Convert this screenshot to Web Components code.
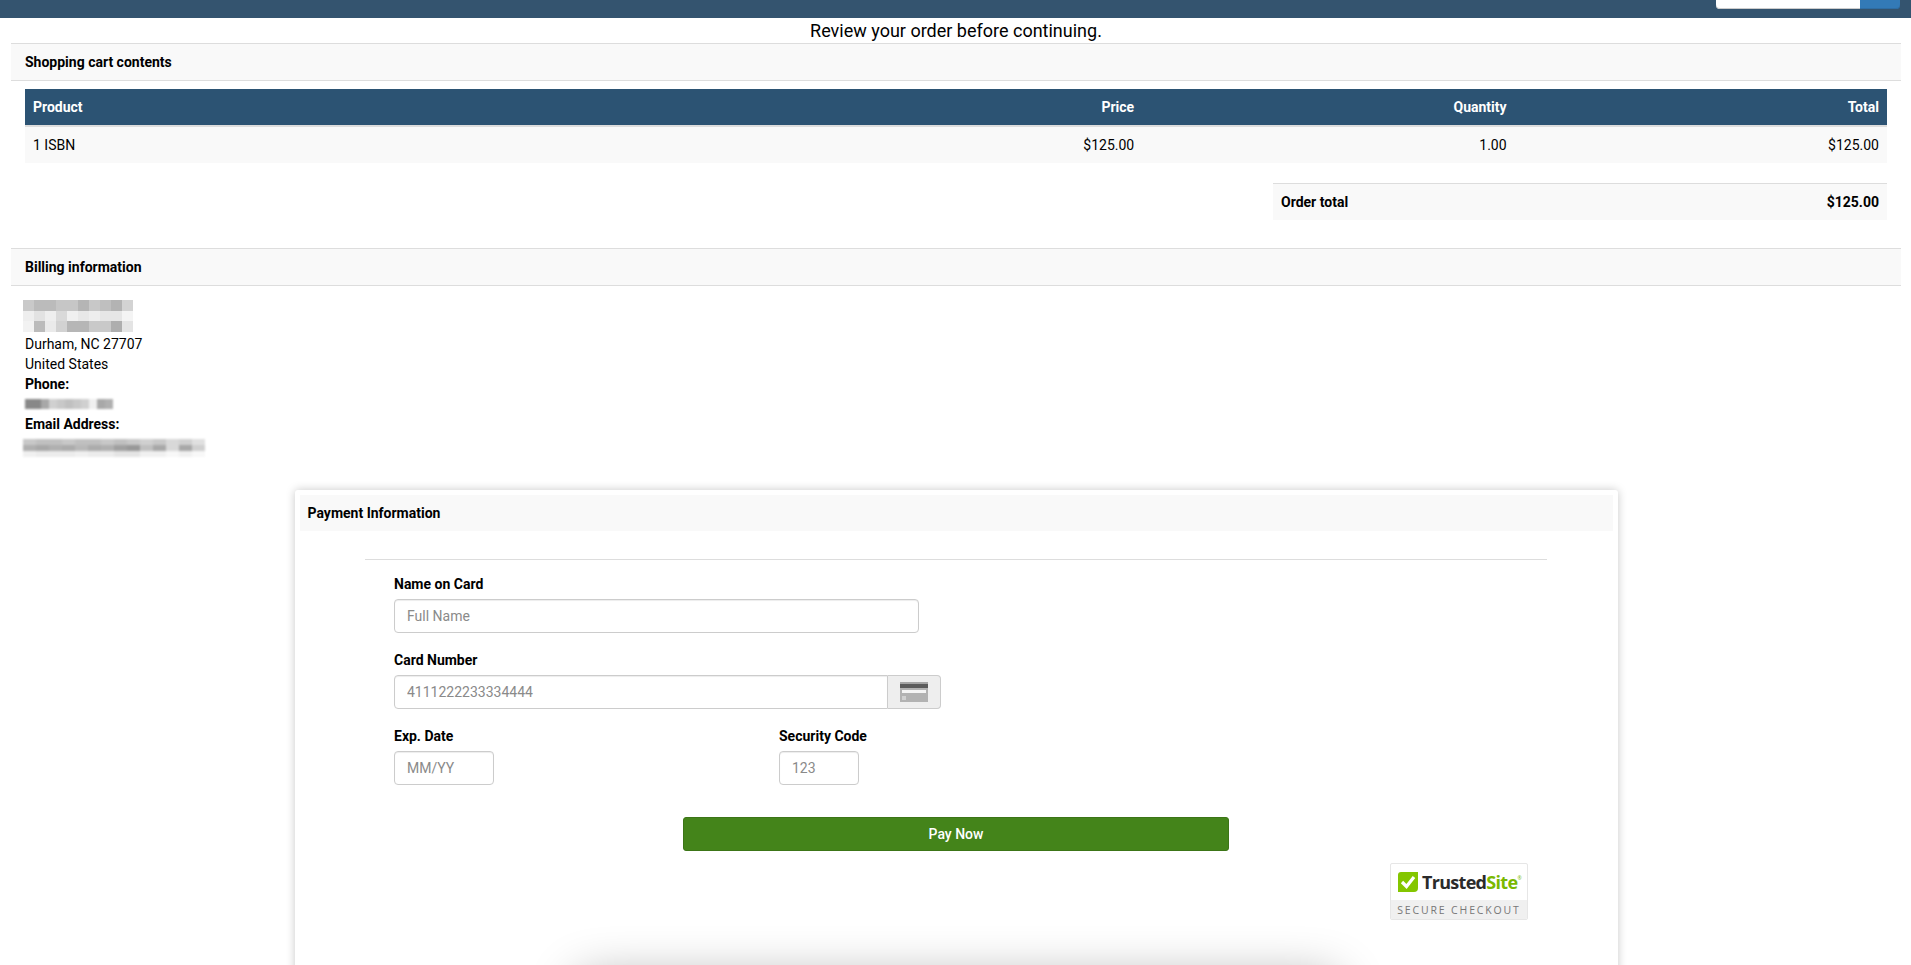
<!DOCTYPE html>
<html lang="en">
<head>
<meta charset="utf-8">
<title>Review order</title>
<style>
  html, body { margin: 0; height: 965px; overflow: hidden; background: #fff; }
  body { font: 14px/20px Roboto, "Liberation Sans", sans-serif; color: #000; }
</style>
</head>
<body>
<top-bar></top-bar>
<page-title>Review your order before continuing.</page-title>

<section-head>Shopping cart contents</section-head>
<cart-table></cart-table>

<section-head style="margin-top:28px">Billing information</section-head>
<billing-info></billing-info>

<payment-card></payment-card>

<script>
class TopBar extends HTMLElement {
  constructor() {
    super();
    this.attachShadow({ mode: 'open' }).innerHTML = `
      <style>
        :host { display: flex; justify-content: flex-end; align-items: flex-end; height: 18px; padding: 0 11px 9px 0; box-sizing: border-box; background: #34546f; overflow: hidden; }
        .search { flex: none; width: 144px; height: 34px; background: #fff; border-radius: 0 0 0 4px; box-shadow: inset 0 -1px 0 #ccc; }
        .go { flex: none; width: 40px; height: 34px; background: #337ab7; border-radius: 0 0 4px 0; box-shadow: inset 0 -1px 0 #2e6da4; }
      </style>
      <div class="search"></div><div class="go"></div>`;
  }
}

class PageTitle extends HTMLElement {
  constructor() {
    super();
    this.attachShadow({ mode: 'open' }).innerHTML = `
      <style>
        :host { display: block; padding-left: 1px; font-size: 18px; line-height: 25px; text-align: center; }
      </style>
      <slot></slot>`;
  }
}

class SectionHead extends HTMLElement {
  constructor() {
    super();
    this.attachShadow({ mode: 'open' }).innerHTML = `
      <style>
        :host { display: block; margin: 0 10px 0 11px; padding: 8px 14px; font-weight: 700; background: #f9f9f9; border-top: 1px solid #ddd; border-bottom: 1px solid #ddd; }
      </style>
      <slot></slot>`;
  }
}

class CartTable extends HTMLElement {
  constructor() {
    super();
    this.attachShadow({ mode: 'open' }).innerHTML = `
      <style>
        :host { display: block; margin: 8px 24px 0 25px; }
        .row { display: grid; grid-template-columns: 50% 10% 20% 20%; }
        .row > div { padding: 8px; text-align: right; }
        .row > div:first-child { text-align: left; }
        .head { background: #2c5373; color: #fff; font-weight: 700; border-bottom: 2px solid #ddd; }
        .line { background: #f9f9f9; }
        .sum { display: flex; justify-content: space-between; width: 614px; box-sizing: border-box; margin: 20px 0 0 auto; padding: 8px; font-weight: 700; background: #f9f9f9; border-top: 1px solid #ddd; }
      </style>
      <div class="row head"><div>Product</div><div>Price</div><div>Quantity</div><div>Total</div></div>
      <div class="row line"><div>1 ISBN</div><div>$125.00</div><div>1.00</div><div>$125.00</div></div>
      <div class="sum"><span>Order total</span><span>$125.00</span></div>`;
  }
}

// smudged blocks standing in for the redacted text, data is one grey per cell
class PixelBlur extends HTMLElement {
  connectedCallback() {
    const rows = this.getAttribute('cells').split('|').map(r => r.split(' '));
    const w = this.getAttribute('cell-w');
    const h = this.getAttribute('cell-h');
    const root = this.attachShadow({ mode: 'open' });
    const cells = rows.flat().map(c => `<i style="background:#${c}${c}${c}"></i>`).join('');
    root.innerHTML = `
      <style>
        :host { display: block; width: max-content; }
        .grid { display: grid; grid-template-columns: repeat(${rows[0].length}, ${w}px); grid-auto-rows: ${h}px; filter: blur(${this.getAttribute('blur') || 0.6}px); }
      </style>
      <div class="grid">${cells}</div>`;
  }
}

class BillingInfo extends HTMLElement {
  constructor() {
    super();
    this.attachShadow({ mode: 'open' }).innerHTML = `
      <style>
        :host { display: block; padding: 14px 0 0 25px; }
        pixel-blur { margin-left: -2px; }
        .phone pixel-blur { margin-left: 0; }
        b { display: block; }
        div { height: 20px; }
        .phone { display: flex; align-items: center; }
        .mail { margin-top: 5px; }
      </style>
      <pixel-blur cell-w="11" cell-h="10.5" cells="c9 bb bb c6 c6 b5 c8 bf b3 d3|ee e2 ee d9 f0 e8 ee e6 e6 f4|f2 bb ea d2 b6 b6 c9 c9 ae e4"></pixel-blur>
      <div style="margin-top:2.500px">Durham, NC 27707</div>
      <div>United States</div>
      <b>Phone:</b>
      <div class="phone"><pixel-blur cell-w="8" cell-h="10" blur="1" cells="88 88 a8 d0 c8 c0 c8 d0 f0 a8 b0"></pixel-blur></div>
      <b>Email Address:</b>
      <pixel-blur class="mail" cell-w="13" cell-h="6" blur="0.8" cells="c8 c0 c0 c8 c0 c0 c8 c0 c8 d0 c8 d8 d0 e0|b0 a8 b0 ac b8 ac b0 a0 98 c0 a8 d8 a8 d0|f0 ec ec ec f0 ec ec e4 e4 f0 f0 f8 f0 f8"></pixel-blur>`;
  }
}

class FormField extends HTMLElement {
  constructor() {
    super();
    this.attachShadow({ mode: 'open' }).innerHTML = `
      <style>
        :host { display: block; margin-bottom: 17px; }
        label { display: block; font-weight: 700; margin-bottom: 5px; }
        .wrap { display: flex; }
        ::slotted(*) { flex: none; }
      </style>
      <label></label>
      <div class="wrap"><slot></slot></div>`;
    this.shadowRoot.querySelector('label').textContent = this.getAttribute('label');
  }
}

class TextBox extends HTMLElement {
  constructor() {
    super();
    this.attachShadow({ mode: 'open' }).innerHTML = `
      <style>
        :host { display: block; }
        input { display: block; width: 100%; height: 34px; box-sizing: border-box; padding: 0 12px; font: inherit; color: #555; background: #fff; border: 1px solid #ccc; border-radius: var(--box-radius, 4px); outline: none; box-shadow: inset 0 1px 1px rgba(0,0,0,.075); }
        input::placeholder { color: #8a8a8a; opacity: 1; }
      </style>
      <input type="text">`;
    this.shadowRoot.querySelector('input').placeholder = this.getAttribute('hint');
  }
}

class TrustBadge extends HTMLElement {
  constructor() {
    super();
    this.attachShadow({ mode: 'open' }).innerHTML = `
      <style>
        :host { display: block; width: 138px; height: 57px; box-sizing: border-box; border: 1px solid #e6e6e6; border-radius: 2px; font-family: "Open Sans", sans-serif; overflow: hidden; }
        .top { display: flex; align-items: center; gap: 4px; height: 36px; padding-left: 7px; box-sizing: border-box; font-size: 18px; font-weight: 700; letter-spacing: -0.7px; color: #2b2b2b; }
        .top em { font-style: normal; color: #7ab800; }
        .top sup { font-size: 5px; font-weight: 400; line-height: 0; letter-spacing: 0; color: #7ab800; vertical-align: 9px; }
        .bottom { height: 20px; background: #f0f0f0; font-size: 10.5px; line-height: 20px; letter-spacing: 1.85px; color: #777; text-align: center; white-space: nowrap; }
        svg { flex: none; display: block; }
      </style>
      <div class="top">
        <svg width="20" height="20" viewBox="0 0 20 20"><path d="M3 0h17v16a4 4 0 0 1-4 4H0V3a3 3 0 0 1 3-3z" fill="#84c600"/><path d="M4 10l4.500 4.500L16 5" fill="none" stroke="#fff" stroke-width="3.200"/></svg>
        <span>Trusted<em>Site</em><sup>®</sup></span>
      </div>
      <div class="bottom">SECURE CHECKOUT</div>`;
  }
}

class PaymentCard extends HTMLElement {
  constructor() {
    super();
    this.attachShadow({ mode: 'open' }).innerHTML = `
      <style>
        :host { display: block; position: relative; width: 1323px; height: 600px; box-sizing: border-box; margin: 33px 0 0 295px; padding: 5px; background: #fff; border-radius: 3px; box-shadow: 0 0 10px rgba(0,0,0,.22); }
        .head { padding: 8px 7.5px; font-weight: 700; background: #f9f9f9; }
        .inner { margin: 28px 66px 0 65px; padding: 14px 0 0 29px; border-top: 1px solid #ddd; }
        .cols { display: grid; grid-template-columns: 385px 1fr; }
        .addon { width: 53px; height: 34px; box-sizing: border-box; display: flex; align-items: center; justify-content: center; background: #eee; border: 1px solid #ccc; border-left: 0; border-radius: 0 4px 4px 0; }
        .pay { display: block; width: 546px; height: 34px; margin: 32px 0 0 289px; padding: 0; font: inherit; font-weight: 500; color: #fff; background: #44841a; border: 1px solid #3c7517; border-radius: 3px; }
        .badge-row { display: flex; justify-content: flex-end; margin: 12px 19px 0 0; }
        .glow { position: absolute; left: 283px; top: 488px; width: 759px; height: 60px; border-radius: 8px; box-shadow: 0 0 50px rgba(0,0,0,.33); }
      </style>
      <div class="head">Payment Information</div>
      <div class="inner">
        <form-field label="Name on Card"><text-box hint="Full Name" style="width:525px"></text-box></form-field>
        <form-field label="Card Number">
          <text-box hint="4111222233334444" style="width:494px;--box-radius:4px 0 0 4px"></text-box>
          <span class="addon">
            <svg width="28" height="20" viewBox="0 0 28 20">
              <rect width="28" height="20" fill="#b2b2b2"/>
              <rect width="28" height="2" fill="#a5a5a5"/>
              <rect y="2" width="28" height="4" fill="#5c5c5c"/>
              <rect x="2" y="8" width="24" height="3" fill="#f4f4f4"/>
              <rect x="2" y="14" width="4" height="4" fill="#d0d0d0"/>
            </svg>
          </span>
        </form-field>
        <div class="cols">
          <form-field label="Exp. Date" style="margin:0"><text-box hint="MM/YY" style="width:100px"></text-box></form-field>
          <form-field label="Security Code" style="margin:0"><text-box hint="123" style="width:80px"></text-box></form-field>
        </div>
        <button class="pay" type="button">Pay Now</button>
        <div class="badge-row"><trust-badge></trust-badge></div>
      </div>
      <div class="glow"></div>`;
  }
}

customElements.define('top-bar', TopBar);
customElements.define('page-title', PageTitle);
customElements.define('section-head', SectionHead);
customElements.define('cart-table', CartTable);
customElements.define('pixel-blur', PixelBlur);
customElements.define('billing-info', BillingInfo);
customElements.define('form-field', FormField);
customElements.define('text-box', TextBox);
customElements.define('trust-badge', TrustBadge);
customElements.define('payment-card', PaymentCard);
</script>
</body>
</html>
